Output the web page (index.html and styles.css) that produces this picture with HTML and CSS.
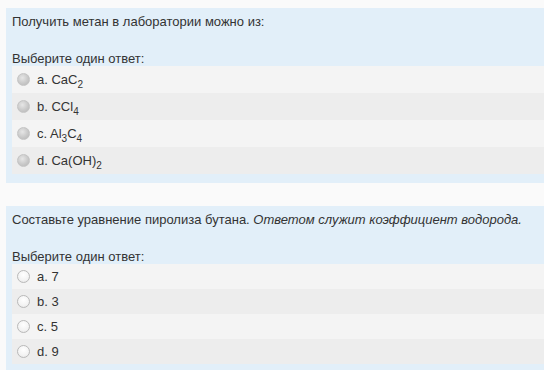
FILE: index.html
```html
<!DOCTYPE html>
<html lang="ru">
<head>
    <meta charset="UTF-8">
    <title>Тест</title>
    <link rel="stylesheet" href="styles.css">
</head>
<body>
    <div class="que">
        <div class="qtext">Получить метан в лаборатории можно из:</div>
        <div class="prompt">Выберите один ответ:</div>
        <div class="answer chem">
            <div class="r0"><input type="radio" name="q1" disabled><label>a. CaC<sub>2</sub></label></div>
            <div class="r1"><input type="radio" name="q1" disabled><label>b. CCl<sub>4</sub></label></div>
            <div class="r0"><input type="radio" name="q1" disabled><label>c. Al<sub>3</sub>C<sub>4</sub></label></div>
            <div class="r1"><input type="radio" name="q1" disabled><label>d. Ca(OH)<sub>2</sub></label></div>
        </div>
    </div>

    <div class="que">
        <div class="qtext">Составьте уравнение пиролиза бутана. <em>Ответом служит коэффициент водорода.</em></div>
        <div class="prompt">Выберите один ответ:</div>
        <div class="answer">
            <div class="r0"><input type="radio" name="q2"><label>a. 7</label></div>
            <div class="r1"><input type="radio" name="q2"><label>b. 3</label></div>
            <div class="r0"><input type="radio" name="q2"><label>c. 5</label></div>
            <div class="r1"><input type="radio" name="q2"><label>d. 9</label></div>
        </div>
    </div>
</body>
</html>
```

FILE: styles.css
```css
body {
    margin: 0;
    padding-top: 8px;
    background-color: #fafafa;
    color: #333;
    font-family: "Liberation Sans", Arial, sans-serif;
    font-size: 13px;
    line-height: 15px;
}

.que {
    margin-left: 6px;
    margin-bottom: 23px;
    padding: 6px 0 9px;
    background-color: #e2eff9;
}

.qtext {
    padding: 0 6px;
}

.prompt {
    margin-top: 22px;
    padding: 0 6px;
}

.answer {
    margin-left: 6px;
}

.answer div {
    display: flex;
    align-items: center;
    height: 15px;
    padding: 5px 0;
}

/* строки с индексами чуть выше */
.answer.chem div {
    padding: 6px 0;
}

.answer .r0 {
    background-color: #f4f4f4;
}

.answer .r1 {
    background-color: #ededed;
}

.answer sub {
    font-size: 10px;
    line-height: 0;
    vertical-align: -4px;
}

.answer input {
    appearance: none;
    margin: 0 7px 0 5px;
    width: 13px;
    height: 13px;
    border-radius: 50%;
    border: 1px solid #b9b9b9;
    background: radial-gradient(circle at 50% 35%, #fff 0%, #f3f3f3 60%, #e3e3e3 100%);
    box-sizing: border-box;
}

.answer input:disabled {
    border-color: #c4c4c4;
    background: radial-gradient(circle at 40% 35%, #e6e6e6 0%, #c9c9c9 55%, #b5b5b5 100%);
}
```
